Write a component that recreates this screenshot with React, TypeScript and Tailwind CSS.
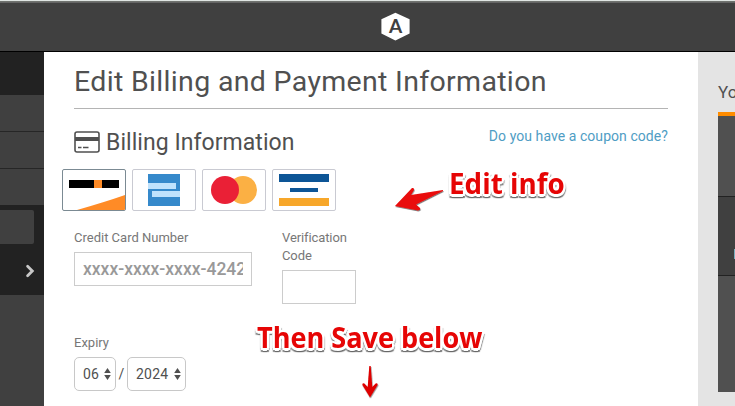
import React from "react";

function TopBar() {
  return (
    <header className="flex h-[52px] shrink-0 flex-col border-b border-black bg-[#404040]">
      <div className="h-px shrink-0 bg-[#e0e5e3]" />
      <div className="h-px shrink-0 bg-[#70736f]" />
      <div className="h-px shrink-0 bg-[#656565]" />
      <div className="flex flex-1 justify-center pt-[9px] pr-0 pl-[56px]">
        <svg width="30" height="30" viewBox="0 0 30 30">
          <path d="M14.4 .7 28.6 7.3V21.6L14.4 28.4 .4 21.6V7.3Z" fill="#fff" />
          <text x="14.5" y="20.8" textAnchor="middle" fontFamily="Lato, sans-serif" fontWeight="700" fontSize="19" fill="#404040">A</text>
        </svg>
      </div>
    </header>
  );
}

function Sidebar() {
  return (
    <aside className="flex w-[44px] shrink-0 flex-col bg-[#404040]">
      <div className="h-[43px] bg-[#222222]" />
      <div className="h-[37px] border-b border-[#262626]" />
      <div className="h-[37px] border-b border-[#262626]" />
      <div className="h-[36px]" />
      <div className="flex h-[90px] flex-col bg-[#222222] pt-[5px]">
        <div className="h-[34px] w-[34px] rounded-r-[2px] bg-[#404040]" />
        <svg className="mt-[20px] ml-[25px]" width="11" height="14" viewBox="0 0 11 14">
          <path d="M2.6 2.3 7.3 7 2.6 11.7" fill="none" stroke="#c8c8c8" strokeWidth="2.8" strokeLinecap="round" />
        </svg>
      </div>
    </aside>
  );
}

function CardLogos() {
  return (
    <div className="ml-[-12px] mt-[15px] flex gap-[6px]">
      <div className="h-[42px] w-[64px] overflow-hidden rounded-[2px] border border-[#7b8a93]">
        <svg width="62" height="40" viewBox="0 0 62 40">
          <path d="M6 10h50v8H6z" fill="#000" />
          <path d="M31 10h8v8h-8z" fill="#ff8b26" />
          <path d="M14 40 Q42 32 62 25V40Z" fill="#ff8b26" />
        </svg>
      </div>
      <div className="h-[42px] w-[64px] rounded-[2px] border border-[#c9cad2]">
        <svg width="62" height="40" viewBox="0 0 62 40">
          <path d="M15 4h32v32H15z" fill="#3589cb" />
          <path d="M15 13h28v6H15zM19 21h28v6H19z" fill="#bfe2fc" />
        </svg>
      </div>
      <div className="h-[42px] w-[64px] rounded-[2px] border border-[#c9cad2]">
        <svg width="62" height="40" viewBox="0 0 62 40">
          <circle cx="40" cy="20" r="14" fill="#fbb044" />
          <circle cx="22" cy="20" r="14" fill="#ea2036" />
        </svg>
      </div>
      <div className="h-[42px] w-[64px] rounded-[2px] border border-[#c9cad2]">
        <svg width="62" height="40" viewBox="0 0 62 40">
          <path d="M6 4h50v8H6zM17 18h28v4H17z" fill="#0d5596" />
          <path d="M6 28h50v8H6z" fill="#f7a72a" />
        </svg>
      </div>
    </div>
  );
}

function Picker({ value, className }: { value: string; className: string }) {
  return (
    <div className={"flex h-[34px] items-center justify-between rounded-[5px] border border-[#c8c8c8] pr-[4px] pl-[8px] text-[14px] text-[#505050] " + className}>
      <span className="tracking-[0.2px]">{value}</span>
      <svg width="7" height="12" viewBox="0 0 7 12">
        <path d="M3.5 0 6.8 5H.2ZM.2 7H6.8L3.5 12Z" fill="#505050" />
      </svg>
    </div>
  );
}

function Summary() {
  return (
    <aside className="flex w-[37px] shrink-0 flex-col overflow-hidden bg-[#e4e4e4] pl-[20px]">
      <div className="h-[60px] pt-[28px] text-[17px] leading-[24px] text-[#505050]">Yo</div>
      <div className="h-[4px] bg-[#ff8c00]" />
      <div className="h-[81px] border-b border-[#222222] bg-[#505050]" />
      <div className="flex h-[79px] justify-end border-b border-[#222222] bg-[#404040] pt-[52px]">
        <div className="h-[10px] w-px bg-[#79aebe]" />
      </div>
      <div className="h-[116px] bg-[#505050]" />
    </aside>
  );
}

// White outline in eight directions, with a soft grey edge below it.
const halo =
  "[text-shadow:2.5px_0_#fff,-2.5px_0_#fff,0_2.5px_#fff,0_-2.5px_#fff,2px_2px_#fff,-2px_2px_#fff,2px_-2px_#fff,-2px_-2px_#fff,3px_2px_1px_#999,-2.5px_2px_1px_#aaa,0_3.5px_1px_#666,2px_3.5px_1px_#777,-2px_3.5px_1px_#888]";

function Annotations() {
  return (
    <div className="pointer-events-none absolute inset-0 font-['Open_Sans',sans-serif] font-bold whitespace-nowrap text-[#e60505]">
      <div className={"absolute top-[163px] left-[449px] origin-left scale-x-[0.975] text-[28.5px] leading-[40px] " + halo}>Edit info</div>
      <div className={"absolute top-[317px] left-[257px] origin-left scale-x-[0.95] text-[28.5px] leading-[40px] " + halo}>Then Save below</div>
      <svg className="absolute inset-0" width="735" height="406" viewBox="0 0 735 406">
        <defs>
          <filter id="shade" x="-20%" y="-20%" width="140%" height="150%">
            <feDropShadow dx="0.5" dy="1" stdDeviation="0.6" floodColor="#333" floodOpacity="0.65" />
          </filter>
        </defs>
        <path filter="url(#shade)" d="M443 190 411 195 414 190Q414.5 187.5 412 188L395 206 418 210.5Q421.5 209.5 419.5 207.5L416 204.5 443 191Z" fill="#e90909" />
        <path filter="url(#shade)" d="M369.3 366H370.7L372.3 387 375.6 383.5Q378 382.5 377.6 385L370 397.5 362.4 385Q362 382.5 364.4 383.5L367.7 387Z" fill="#df0000" />
      </svg>
    </div>
  );
}

export default function App() {
  return (
    <div className="relative flex h-[406px] w-[735px] flex-col overflow-hidden bg-white font-[Roboto,sans-serif] text-[#505050]">
      <TopBar />
      <div className="flex min-h-0 flex-1">
        <Sidebar />
        <main className="min-w-0 flex-1 pr-[30px] pl-[30px]">
          <h1 className="h-[57px] border-b border-[#b4b4b4] pt-[11px] text-[28.5px] leading-[38px] tracking-[0.33px] whitespace-nowrap">Edit Billing and Payment Information</h1>
          <div className="flex items-start justify-between">
            <h2 className="flex h-[45px] items-start gap-[6px] pt-[22px] text-[23px] leading-[24px] tracking-[0.05px] whitespace-nowrap">
              <svg width="26" height="22" viewBox="0 0 26 22">
                <rect x="1" y="1" width="24" height="20" rx="2" fill="none" stroke="#505050" strokeWidth="1.6" />
                <path d="M1 6h24v4H1z" fill="#505050" />
                <path d="M4 16.5h3.5M9 16.5h5.5" stroke="#505050" strokeWidth="1.4" />
              </svg>
              <span>Billing Information</span>
            </h2>
            <a className="pt-[17px] text-[14px] leading-[20px] tracking-[0.06px] whitespace-nowrap text-[#4f9dc4]">Do you have a coupon code?</a>
          </div>
          <CardLogos />
          <div className="mt-[18px] flex gap-[30px] text-[13px] leading-[18px] text-[#777777]">
            <div className="w-[178px]">
              <div>Credit Card Number</div>
              <div className="mt-[5px] h-[34px] border border-[#cccccc] px-[8px]">
                <div className="overflow-hidden text-[17.5px] leading-[32px] font-medium whitespace-nowrap text-[#999999]">xxxx-xxxx-xxxx-4242</div>
              </div>
            </div>
            <div className="w-[74px]">
              <div className="tracking-[-0.1px]">Verification Code</div>
              <div className="mt-[5px] h-[34px] border border-[#cccccc]" />
            </div>
          </div>
          <div className="mt-[30px] text-[13px] leading-[18px] text-[#777777]">Expiry</div>
          <div className="mt-[5px] flex items-center">
            <Picker value="06" className="w-[42px]" />
            <span className="w-[11px] text-center text-[14px]">/</span>
            <Picker value="2024" className="w-[59px]" />
          </div>
        </main>
        <Summary />
      </div>
      <Annotations />
    </div>
  );
}
